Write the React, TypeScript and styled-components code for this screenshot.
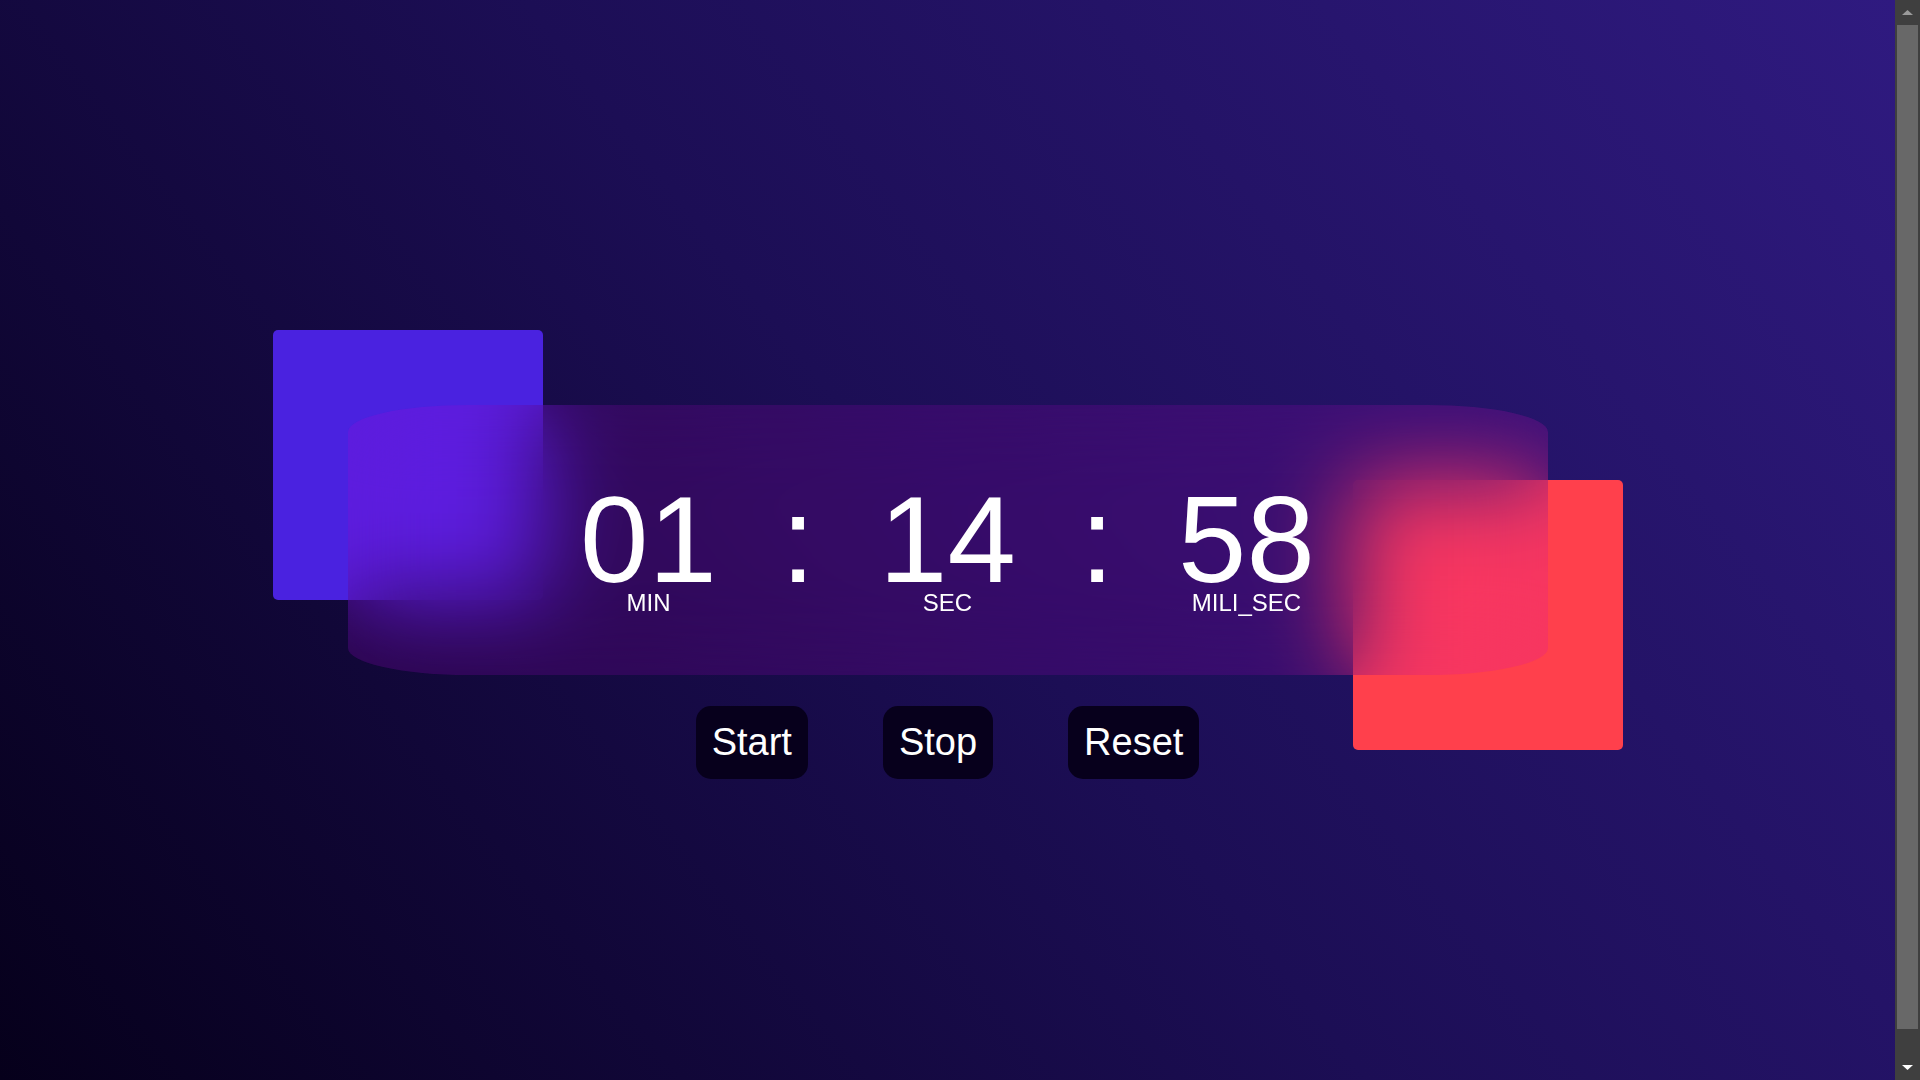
import React from "react";
import styled, { createGlobalStyle } from "styled-components";

const GlobalStyle = createGlobalStyle`
  html, body {
    margin: 0;
    height: 100%;
    overflow: hidden;
  }
  body {
    font-family: "Liberation Sans", Arial, Helvetica, sans-serif;
    color: #ffffff;
    background: #3f3f3f;
  }
`;

const Frame = styled.div`
  display: flex;
  height: 100vh;
`;

const Page = styled.main`
  flex: 1;
  min-width: 0;
  display: grid;
  grid-template-rows: 1fr auto 1fr;
  justify-items: center;
  background: linear-gradient(52deg, #06001b 0%, #1c0e55 50%, #2f1a80 100%);
`;

const Stage = styled.div`
  grid-row: 2;
  position: relative;
  width: 1200px;
  height: 270px;
`;

const Square = styled.div<{ $tone: "blue" | "red" }>`
  position: absolute;
  width: 270px;
  height: 270px;
  border-radius: 5px;
  background: ${(p) => (p.$tone === "blue" ? "#4a22e0" : "#ff404c")};
  ${(p) =>
    p.$tone === "blue"
      ? "top: -75px; left: -75px;"
      : "bottom: -75px; right: -75px;"}
`;

const Card = styled.section`
  position: relative;
  z-index: 1;
  box-sizing: border-box;
  width: 100%;
  height: 100%;
  padding-top: 26px;
  border-radius: 10%;
  background: rgba(200, 0, 215, 0.15);
  backdrop-filter: blur(45px);
  -webkit-backdrop-filter: blur(45px);
  display: flex;
  justify-content: center;
  align-items: center;
`;

const Readout = styled.div`
  display: flex;
  align-items: flex-start;
  gap: 64px;
`;

const Unit = styled.div`
  display: flex;
  flex-direction: column;
  align-items: center;
`;

const Digits = styled.span`
  font-size: 123px;
  line-height: 100px;
  color: #ffffff;
`;

const Colon = styled.span`
  font-size: 123px;
  line-height: 100px;
  color: #ffffff;
`;

const Label = styled.span`
  font-size: 24px;
  line-height: 26px;
  color: #ffffff;
`;

const Controls = styled.div`
  grid-row: 3;
  align-self: start;
  margin-top: 31px;
  display: flex;
  gap: 75px;
`;

const Button = styled.button`
  font-family: "Liberation Sans", Arial, Helvetica, sans-serif;
  font-size: 38px;
  line-height: normal;
  padding: 15px 16px;
  border: none;
  border-radius: 15px;
  background: #07001c;
  color: #ffffff;
  cursor: pointer;
`;

const ScrollRail = styled.div`
  width: 25px;
  flex: none;
  display: flex;
  flex-direction: column;
  background: #3f3f3f;
`;

const RailButton = styled.div`
  height: 25px;
  flex: none;
  display: flex;
  align-items: center;
  justify-content: center;
`;

const RailTrack = styled.div`
  flex: 1;
  padding: 0 2px 26px;
  display: flex;
`;

const RailThumb = styled.div`
  flex: 1;
  background: #686868;
`;

const units = [
  { value: "01", label: "MIN" },
  { value: "14", label: "SEC" },
  { value: "58", label: "MILI_SEC" },
];

export default function App() {
  return (
    <>
      <GlobalStyle />
      <Frame>
        <Page>
          <Stage>
            <Square $tone="blue" />
            <Square $tone="red" />
            <Card>
              <Readout>
                {units.map((u, i) => (
                  <React.Fragment key={u.label}>
                    {i > 0 && <Colon>:</Colon>}
                    <Unit>
                      <Digits>{u.value}</Digits>
                      <Label>{u.label}</Label>
                    </Unit>
                  </React.Fragment>
                ))}
              </Readout>
            </Card>
          </Stage>
          <Controls>
            <Button>Start</Button>
            <Button>Stop</Button>
            <Button>Reset</Button>
          </Controls>
        </Page>
        <ScrollRail>
          <RailButton>
            <svg width="25" height="25" viewBox="0 0 25 25">
              <polygon points="7,15 12.5,10 18,15" fill="#9a9a9a" />
            </svg>
          </RailButton>
          <RailTrack>
            <RailThumb />
          </RailTrack>
          <RailButton>
            <svg width="25" height="25" viewBox="0 0 25 25">
              <polygon points="7,10 18,10 12.5,15" fill="#ffffff" />
            </svg>
          </RailButton>
        </ScrollRail>
      </Frame>
    </>
  );
}
